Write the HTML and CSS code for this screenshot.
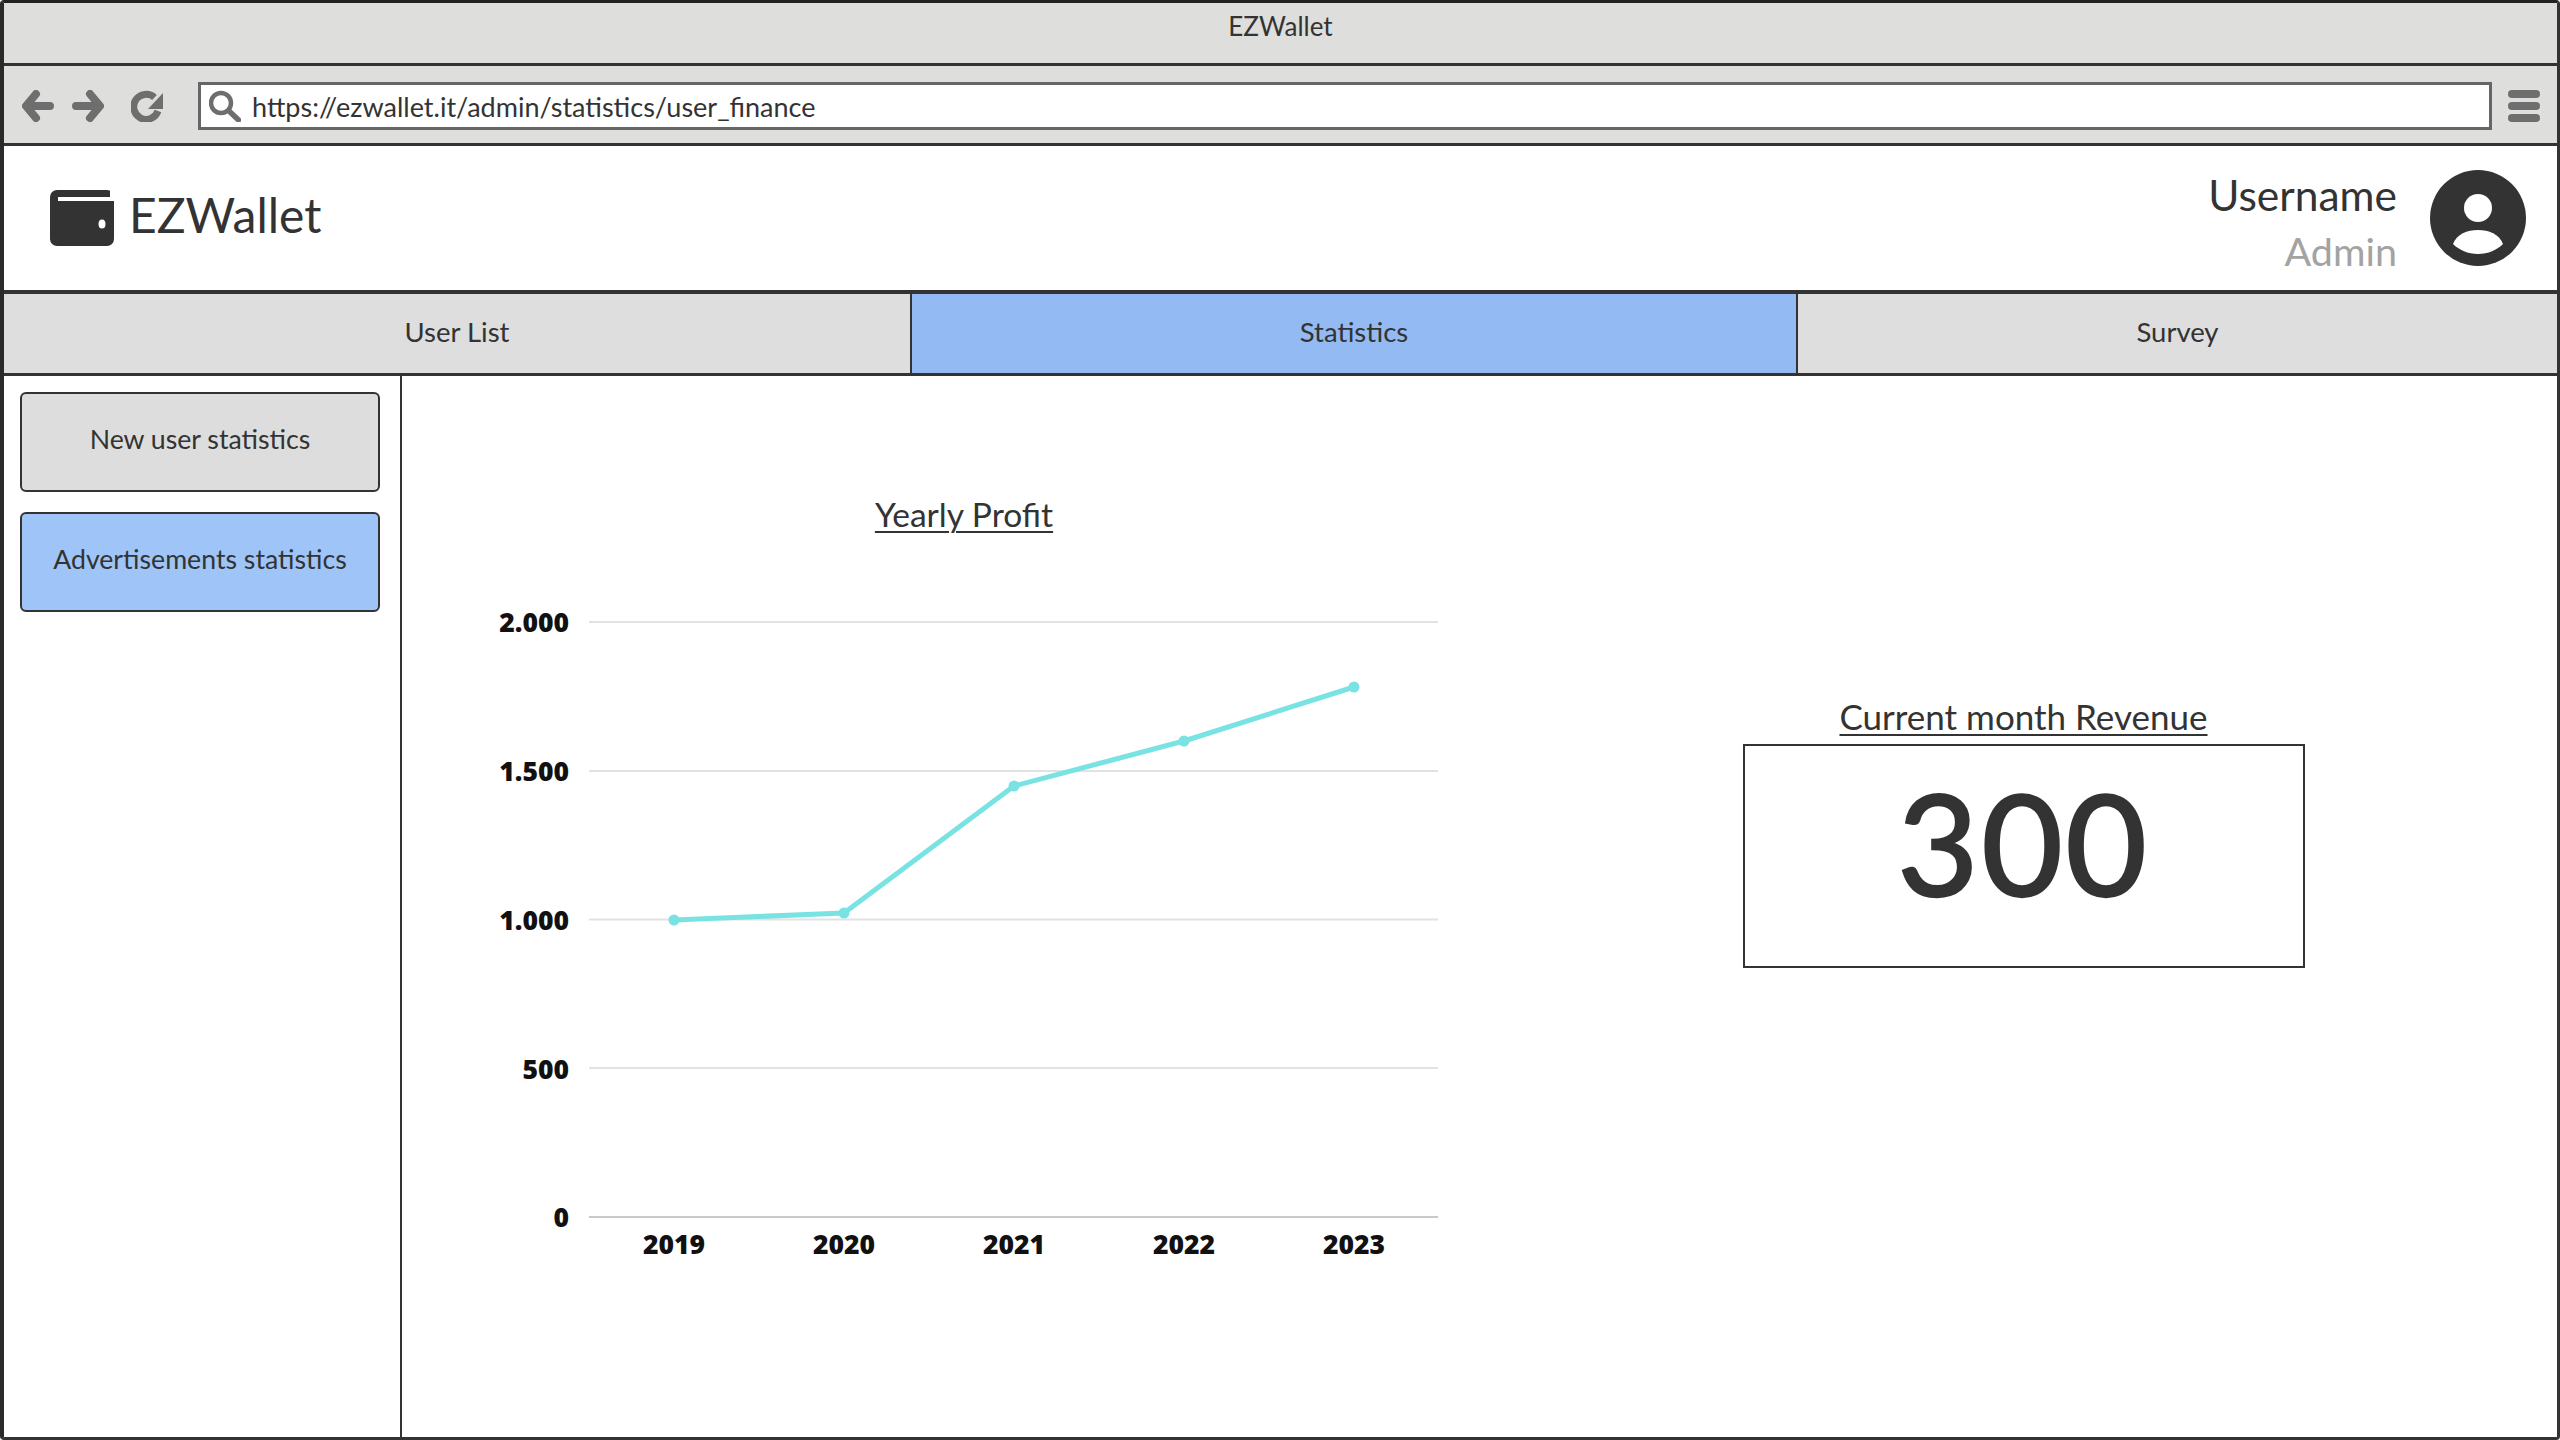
FILE: index.html
```html
<!DOCTYPE html>
<html lang="en">
<head>
<meta charset="utf-8">
<title>EZWallet</title>
<link rel="stylesheet" href="styles.css">
</head>
<body>
<div class="frame">
  <div class="titlebar">EZWallet</div>
  <div class="toolbar">
    <svg class="nav-icon" viewBox="0 0 32 32"><path d="M14 4 4 16l10 12M5 16h23" class="icon-stroke"/></svg>
    <svg class="nav-icon" viewBox="0 0 32 32"><path d="M18 4l10 12-10 12M27 16H4" class="icon-stroke"/></svg>
    <svg class="nav-icon reload" viewBox="0 0 32 32"><path d="M23.500 7.500A12.500 12.500 0 1 0 27 21" class="icon-arc"/><path d="M32 3v16H17z" class="icon-fill"/></svg>
    <div class="address">
      <svg class="search-icon" viewBox="0 0 32 32"><circle cx="12" cy="13" r="10" class="search-ring"/><path d="M20 21l9.500 9" class="search-handle"/></svg>
      <span class="url">https://ezwallet.it/admin/statistics/user_finance</span>
    </div>
    <div class="menu"><i></i><i></i><i></i></div>
  </div>
  <header class="appbar">
    <div class="brand">
      <svg class="wallet" viewBox="0 0 64 56"><rect width="64" height="56" rx="7" class="wallet-body"/><rect x="8" y="7" width="56" height="4" class="wallet-cut"/><rect x="60" y="0" width="4" height="7" class="wallet-cut"/><ellipse cx="52" cy="34" rx="3.500" ry="4.500" class="wallet-cut"/></svg>
      <span class="brand-name">EZWallet</span>
    </div>
    <div class="user">
      <div class="user-text">
        <div class="user-name">Username</div>
        <div class="user-role">Admin</div>
      </div>
      <svg class="avatar" viewBox="0 0 96 96"><circle cx="48" cy="48" r="48" class="avatar-bg"/><ellipse cx="48" cy="38" rx="14" ry="14" class="avatar-fg"/><path d="M23 74c4-10 14-14 25-14s21 4 25 14c-6 6-15 10-25 10s-19-4-25-10z" class="avatar-fg"/></svg>
    </div>
  </header>
  <nav class="tabs">
    <div class="tab tab-a">User List</div>
    <div class="tab tab-b active">Statistics</div>
    <div class="tab tab-c">Survey</div>
  </nav>
  <div class="content">
    <aside class="sidebar">
      <div class="side-btn">New user statistics</div>
      <div class="side-btn active">Advertisements statistics</div>
    </aside>
    <main class="main">
      <section class="chart-col">
        <h2 class="heading heading-chart">Yearly Profit</h2>
        <svg class="chart" viewBox="490 600 948 690">
          <g class="grid">
            <path d="M589 622H1438"/>
            <path d="M589 771H1438"/>
            <path d="M589 919.500H1438"/>
            <path d="M589 1068H1438"/>
            <path d="M589 1217H1438" class="axis"/>
          </g>
          <g class="y-labels">
            <text x="569" y="632">2.000</text>
            <text x="569" y="781">1.500</text>
            <text x="569" y="930">1.000</text>
            <text x="569" y="1079">500</text>
            <text x="569" y="1227">0</text>
          </g>
          <g class="x-labels">
            <text x="674" y="1254">2019</text>
            <text x="844" y="1254">2020</text>
            <text x="1014" y="1254">2021</text>
            <text x="1184" y="1254">2022</text>
            <text x="1354" y="1254">2023</text>
          </g>
          <polyline class="series" points="674,920 844,913 1014,786 1184,741 1354,687"/>
          <g class="dots">
            <circle cx="674" cy="920" r="5.500"/>
            <circle cx="844" cy="913" r="5.500"/>
            <circle cx="1014" cy="786" r="5.500"/>
            <circle cx="1184" cy="741" r="5.500"/>
            <circle cx="1354" cy="687" r="5.500"/>
          </g>
        </svg>
      </section>
      <section class="revenue-col">
        <h2 class="heading heading-revenue">Current month Revenue</h2>
        <div class="revenue-box">300</div>
      </section>
    </main>
  </div>
</div>
</body>
</html>
```
FILE: styles.css
```css
* { box-sizing: border-box; }
html, body { margin: 0; padding: 0; background: #fff; }
body { font-family: "Lato", "Liberation Sans", sans-serif; color: #333; }

.frame {
  width: 2560px;
  height: 1440px;
  border: 3px solid #333;
  border-top-color: #222;
  border-left: 4px solid #2a2a2a;
  border-radius: 4px;
  display: flex;
  flex-direction: column;
  overflow: hidden;
}

.titlebar {
  height: 63px;
  flex: none;
  background: #dededc;
  border-bottom: 3px solid #333;
  display: flex;
  align-items: center;
  justify-content: center;
  font-size: 26px;
  padding-bottom: 14px;
}

.toolbar {
  height: 80px;
  flex: none;
  background: #dededc;
  border-bottom: 3px solid #333;
  display: flex;
  align-items: center;
  padding: 3px 17px 0 18px;
}
.nav-icon { width: 32px; height: 32px; flex: none; margin-right: 18px; }
.nav-icon.reload { margin-left: 9px; margin-right: 35px; }
.icon-stroke { fill: none; stroke: #6e6e6e; stroke-width: 8; stroke-linecap: round; stroke-linejoin: round; }
.icon-arc { fill: none; stroke: #6e6e6e; stroke-width: 7; }
.icon-fill { fill: #6e6e6e; }

.address {
  flex: none;
  width: 2294px;
  height: 48px;
  background: #fff;
  border: 3px solid #666;
  display: flex;
  align-items: center;
  padding-left: 8px;
}
.search-icon { width: 32px; height: 32px; flex: none; margin-right: 11px; }
.search-ring { fill: none; stroke: #6e6e6e; stroke-width: 4.500; }
.search-handle { fill: none; stroke: #6e6e6e; stroke-width: 5.500; stroke-linecap: round; }
.url { font-size: 27px; white-space: nowrap; }

.menu { width: 32px; margin-left: 16px; flex: none; display: flex; flex-direction: column; gap: 4px; }
.menu i { display: block; height: 8px; border-radius: 4px; background: #6e6e6e; }

.appbar {
  height: 148px;
  flex: none;
  border-bottom: 4px solid #333;
  display: flex;
  align-items: center;
  justify-content: space-between;
  padding: 0 31px 0 46px;
}
.brand { display: flex; align-items: center; gap: 15px; }
.wallet { width: 64px; height: 56px; flex: none; }
.wallet-body { fill: #333; }
.wallet-cut { fill: #fff; }
.brand-name { font-size: 48px; line-height: 56px; padding-bottom: 6px; }
.user { display: flex; align-items: center; gap: 33px; }
.user-text { text-align: right; padding-top: 10px; }
.user-name { font-size: 42.500px; line-height: 56px; }
.user-role { font-size: 39.500px; line-height: 56px; color: #a3a3a3; }
.avatar { width: 96px; height: 96px; flex: none; }
.avatar-bg { fill: #333; }
.avatar-fg { fill: #fff; }

.tabs {
  height: 82px;
  flex: none;
  display: flex;
  border-bottom: 3px solid #333;
}
.tab {
  background: #dedede;
  display: flex;
  align-items: center;
  justify-content: center;
  font-size: 27.500px;
  padding-bottom: 5px;
}
.tab-a { width: 908px; border-right: 2px solid #333; }
.tab-b { width: 886px; border-right: 2px solid #333; }
.tab-c { flex: 1; }
.tab.active { background: #93baf2; }

.content { flex: 1; display: flex; min-height: 0; }

.sidebar {
  width: 398px;
  flex: none;
  border-right: 2px solid #333;
  padding: 16px 20px 0 16px;
  display: flex;
  flex-direction: column;
  gap: 20px;
}
.side-btn {
  height: 100px;
  border: 2px solid #333;
  border-radius: 6px;
  background: #dddddd;
  display: flex;
  align-items: center;
  justify-content: center;
  font-size: 26.700px;
  padding-bottom: 7px;
}
.side-btn.active { background: #9fc5f8; }

.main { flex: 1; display: flex; min-width: 0; }

.heading {
  margin: 0;
  font-weight: 400;
  line-height: 40px;
  text-align: center;
  text-decoration: underline;
  text-decoration-thickness: 2px;
  text-underline-offset: 4px;
}
.heading-chart { font-size: 33.600px; }
.heading-revenue { font-size: 35px; }

.chart-col { width: 948px; margin-left: 88px; padding-top: 118px; flex: none; }
.chart { display: block; width: 948px; height: 690px; margin-top: 66px; }
.grid path { stroke: #e2e2e2; stroke-width: 2; fill: none; }
.grid path.axis { stroke: #c9c9c9; }
.y-labels text, .x-labels text {
  font-family: "Open Sans", "Liberation Sans", sans-serif;
  font-weight: 800;
  font-size: 26.500px;
  fill: #111;
}
.y-labels text { text-anchor: end; }
.x-labels text { text-anchor: middle; }
.series { fill: none; stroke: #79e2e2; stroke-width: 5; stroke-linejoin: round; }
.dots circle { fill: #79e2e2; }

.revenue-col { width: 562px; margin-left: 304.500px; padding-top: 320px; flex: none; }
.revenue-box {
  margin-top: 8px;
  height: 224px;
  border: 2px solid #333;
  display: flex;
  align-items: center;
  justify-content: center;
  font-size: 140px;
  letter-spacing: 3px;
  -webkit-text-stroke: 2.500px #333;
  padding-bottom: 28px;
}
```
